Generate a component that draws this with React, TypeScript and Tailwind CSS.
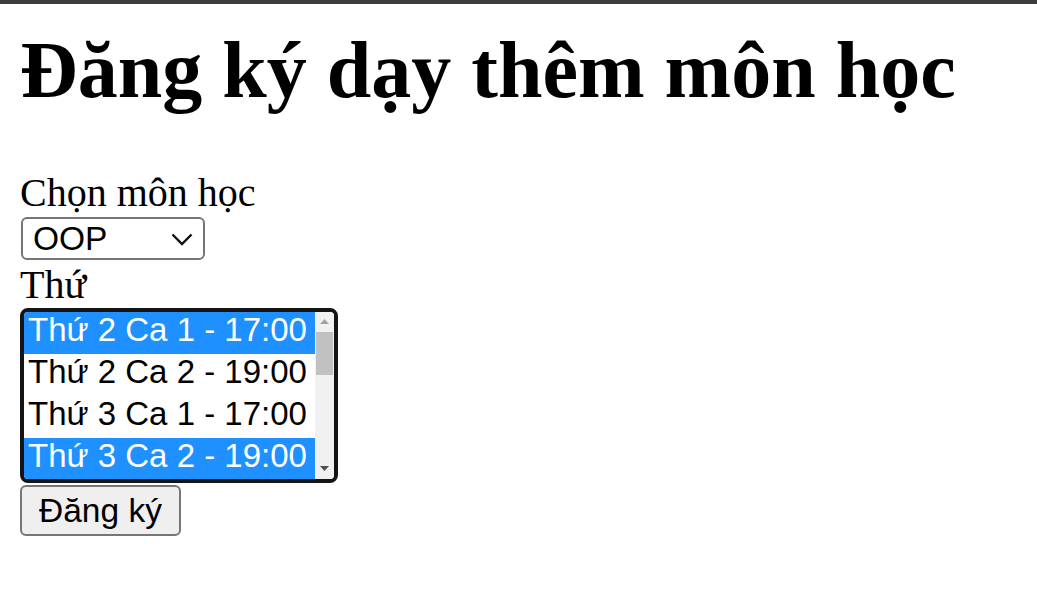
import React from "react";

const options = [
  { label: "Thứ 2 Ca 1 - 17:00", selected: true },
  { label: "Thứ 2 Ca 2 - 19:00", selected: false },
  { label: "Thứ 3 Ca 1 - 17:00", selected: false },
  { label: "Thứ 3 Ca 2 - 19:00", selected: true },
];

export default function App() {
  return (
    <div className="w-[1037px] h-[598px] bg-white text-black overflow-hidden">
      <div className="h-[4px] bg-[#3c3c3c]" />
      <div className="pl-[20px]">
        <h1 className="mt-[20px] mb-[54px] text-[80px] leading-[92px] font-bold font-['Liberation_Serif',serif] whitespace-nowrap">
          Đăng ký dạy thêm môn học
        </h1>
        <div className="text-[40px] leading-[46px] font-['Liberation_Serif',serif] h-[47px]">
          Chọn môn học
        </div>
        <div className="relative ml-[1px] w-[184px] h-[43px] rounded-[6px] border-[2px] border-[#767676] bg-white font-['Liberation_Sans',Arial,sans-serif] text-[33.5px] leading-[39px] pl-[10px]">
          OOP
          <svg
            className="absolute left-[148px] top-[14px]"
            width="22"
            height="13"
            viewBox="0 0 22 13"
            fill="none"
          >
            <polyline points="1.5,1.5 11,11 20.5,1.5" stroke="#111" strokeWidth="2.4" />
          </svg>
        </div>
        <div className="mt-[2px] text-[40px] leading-[46px] font-['Liberation_Serif',serif] h-[46px]">
          Thứ
        </div>
        <div className="flex w-[318px] h-[175px] border-[4px] border-[#141414] rounded-[8px] bg-white overflow-hidden font-['Liberation_Sans',Arial,sans-serif] text-[33px]">
          <div className="flex-1 flex flex-col">
            {options.map((o) => (
              <div
                key={o.label}
                className={
                  "h-[42px] shrink-0 leading-[35px] pl-[4px] whitespace-nowrap overflow-hidden " +
                  (o.selected ? "bg-[#1e90ff] text-white" : "text-black")
                }
              >
                {o.label}
              </div>
            ))}
          </div>
          <div className="w-[19px] bg-[#f1f1f1] relative">
            <svg className="absolute left-[5px] top-[7px]" width="9" height="5" viewBox="0 0 9 5">
              <polygon points="0,5 9,5 4.5,0" fill="#a3a3a3" />
            </svg>
            <div className="absolute left-[1px] top-[20px] w-[17px] h-[43px] bg-[#c1c1c1]" />
            <svg className="absolute left-[5px] bottom-[8px]" width="9" height="5" viewBox="0 0 9 5">
              <polygon points="0,0 9,0 4.5,5" fill="#505050" />
            </svg>
          </div>
        </div>
        <button className="mt-[2px] w-[161px] h-[51px] rounded-[6px] border-[2px] border-[#767676] bg-[#efefef] font-['Liberation_Sans',Arial,sans-serif] text-[33.5px] leading-[39px] text-black">
          Đăng ký
        </button>
      </div>
    </div>
  );
}
